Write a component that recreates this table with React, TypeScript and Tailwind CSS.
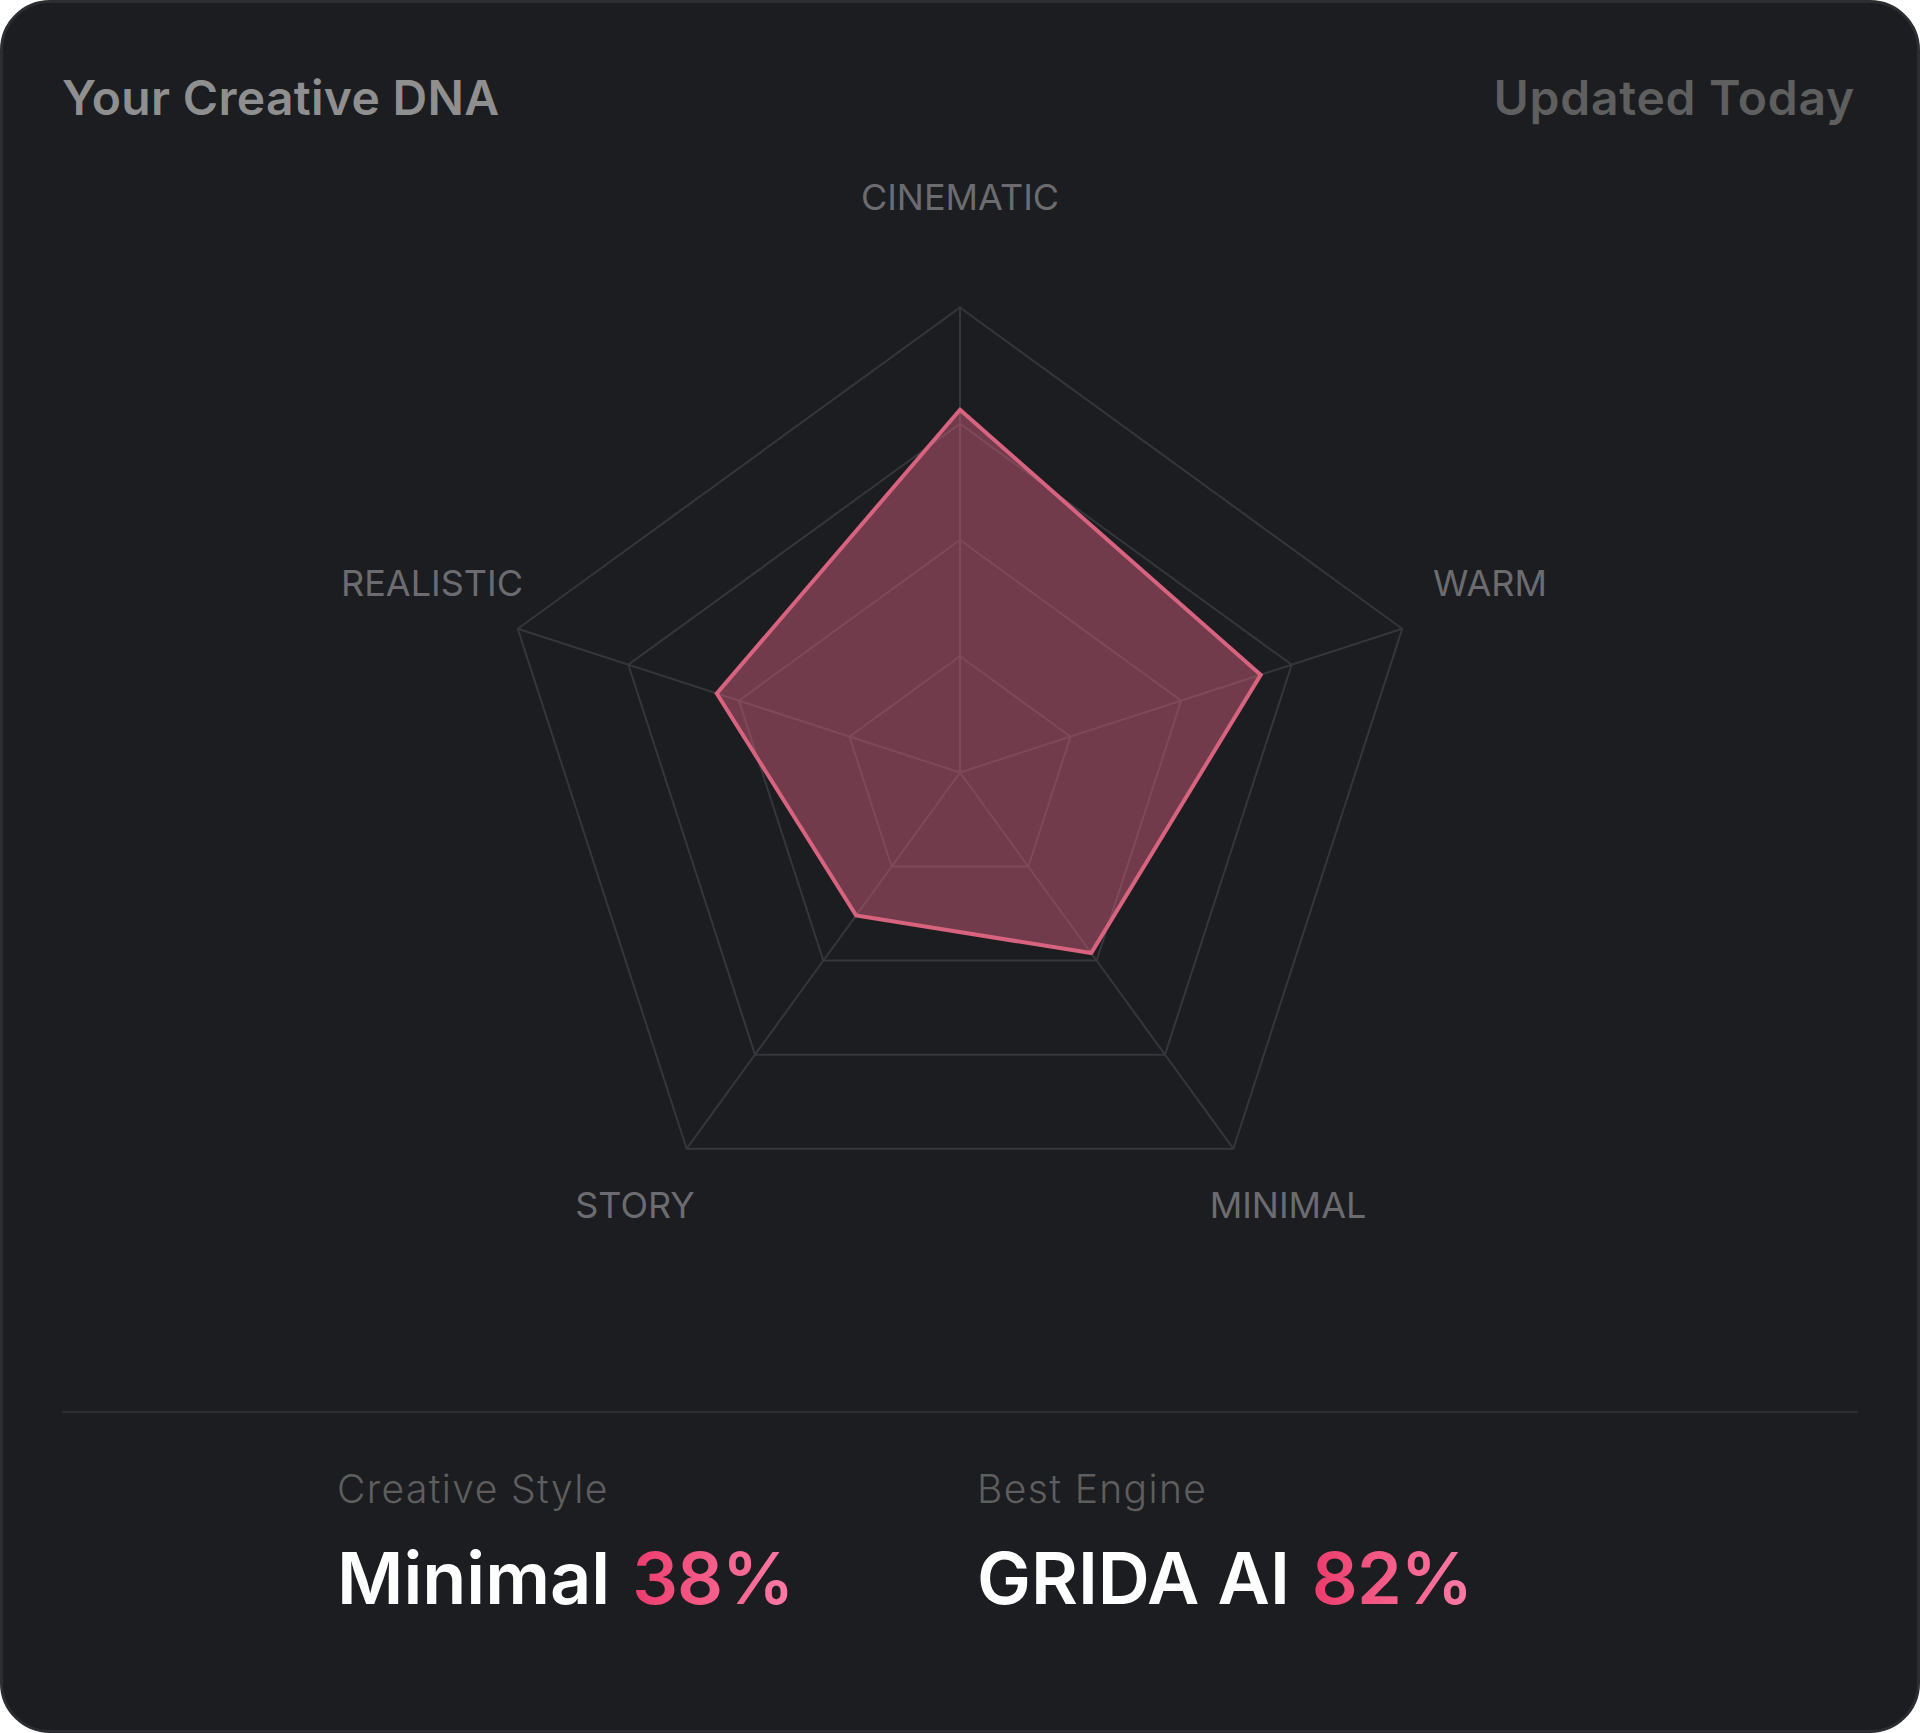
import React from "react";

const CX = 960;
const CY = 772.5;
const R = 465;
const AXES = ["CINEMATIC", "WARM", "MINIMAL", "STORY", "REALISTIC"];
const VALUES = [0.78, 0.68, 0.48, 0.38, 0.55];

function pt(i: number, r: number): [number, number] {
  const a = ((-90 + 72 * i) * Math.PI) / 180;
  return [CX + r * Math.cos(a), CY + r * Math.sin(a)];
}

function poly(rs: number[]): string {
  return rs.map((r, i) => pt(i, r).map((v) => v.toFixed(2)).join(",")).join(" ");
}

const LABELS: { text: string; x: number; y: number }[] = [
  { text: "CINEMATIC", x: 960, y: 210 },
  { text: "WARM", x: 1490, y: 596 },
  { text: "MINIMAL", x: 1288, y: 1218 },
  { text: "STORY", x: 635, y: 1218 },
  { text: "REALISTIC", x: 432, y: 596 },
];

function Radar() {
  const levels = [0.25, 0.5, 0.75, 1];
  return (
    <svg width={1914} height={1286} viewBox="3 125 1914 1286" className="block">
      {levels.map((l) => (
        <polygon
          key={l}
          points={poly([l * R, l * R, l * R, l * R, l * R])}
          fill="none"
          stroke="#35363b"
          strokeWidth={2}
        />
      ))}
      {AXES.map((_, i) => {
        const [x, y] = pt(i, R);
        return (
          <line key={i} x1={CX} y1={CY} x2={x} y2={y} stroke="#35363b" strokeWidth={2} />
        );
      })}
      <polygon
        points={poly(VALUES.map((v) => v * R))}
        fill="#d6607f"
        fillOpacity={0.46}
        stroke="#d8637f"
        strokeWidth={4}
        strokeLinejoin="miter"
      />
      {LABELS.map((l) => (
        <text
          key={l.text}
          x={l.x}
          y={l.y}
          textAnchor="middle"
          fill="#6c6c70"
          fontSize={36}
          fontWeight={400}
          fontFamily="Inter, sans-serif"
        >
          {l.text}
        </text>
      ))}
    </svg>
  );
}

export default function App() {
  return (
    <div className="w-[1920px] h-[1733px] bg-white font-[Inter,sans-serif]">
      <div className="w-full h-full rounded-[50px] border-[3px] border-[#2c2d32] bg-[#1c1d21] overflow-hidden flex flex-col">
        <div className="flex justify-between items-start pl-[59px] pr-[62px] pt-[68px]">
          <div className="text-[48px] leading-[54px] font-semibold tracking-[0.3px] text-[#8f8f8f]">
            Your Creative DNA
          </div>
          <div className="text-[48px] leading-[54px] font-semibold tracking-[0.75px] text-[#5f5f5f]">
            Updated Today
          </div>
        </div>
        <Radar />
        <div className="mx-[59px] h-[2px] bg-[#2d2e33]" />
        <div className="flex pl-[334px] pt-[52px]">
          <div className="w-[640px] flex flex-col">
            <div className="text-[39px] leading-[48px] font-light tracking-[1.4px] text-[#5e5e5e]">
              Creative Style
            </div>
            <div className="mt-[29px] flex items-baseline gap-[22px] text-[72px] leading-none font-semibold">
              <span className="text-white">Minimal</span>
              <span className="bg-linear-to-r from-[#ec3a6c] to-[#fc7ba6] bg-clip-text text-transparent tracking-[-1px]">
                38%
              </span>
            </div>
          </div>
          <div className="flex flex-col">
            <div className="text-[39px] leading-[48px] font-light tracking-[1.4px] text-[#5e5e5e]">
              Best Engine
            </div>
            <div className="mt-[29px] flex items-baseline gap-[22px] text-[72px] leading-none font-semibold">
              <span className="text-white">GRIDA AI</span>
              <span className="bg-linear-to-r from-[#ec3a6c] to-[#fc7ba6] bg-clip-text text-transparent tracking-[-1px]">
                82%
              </span>
            </div>
          </div>
        </div>
      </div>
    </div>
  );
}
